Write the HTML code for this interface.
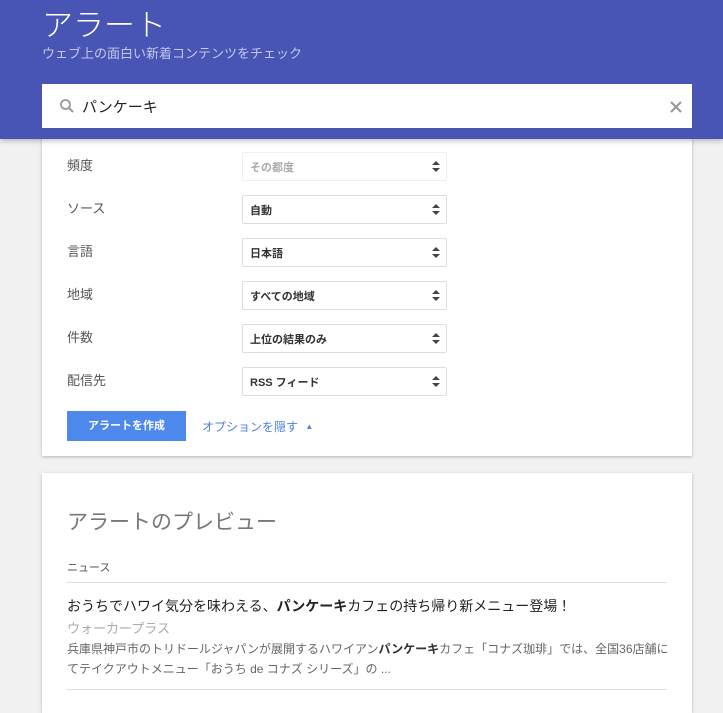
<!DOCTYPE html>
<html><head><meta charset="utf-8"><style>
*{margin:0;padding:0;box-sizing:border-box}
body{width:723px;height:700px;overflow:hidden;background:#f1f1f1;font-family:"Liberation Sans","Noto Sans CJK JP",sans-serif;position:relative}
.hdr{position:absolute;left:0;top:0;width:723px;height:139px;background:#4855b5;box-shadow:0 2px 5px rgba(0,0,0,.25);z-index:2}
.t1{position:absolute;left:42px;top:0px;font-size:31px;color:#fff;font-weight:300}
.t2{position:absolute;left:42px;top:43px;font-size:13px;color:#c3c8ea}
.search{position:absolute;left:42px;top:84px;width:650px;height:44px;background:#fff}
.search .q{position:absolute;left:40px;top:12px;font-size:15px;color:#222}
.lab{position:absolute;left:25px;font-size:13px;color:#555}
.card{position:absolute;left:42px;width:650px;background:#fff;box-shadow:0 1px 3px rgba(0,0,0,.25)}
.sel{position:absolute;left:200px;width:205px;height:29px;border:1px solid #ddd;border-radius:2px;font-size:11px;font-weight:bold;color:#333;padding:6px 0 0 7px}
.sel.dis{color:#aaa;border-color:#eee}
.sel:after{content:"";position:absolute;right:6px;top:8px;border:4px solid transparent;border-bottom:4px solid #444;border-top:none}
.sel:before{content:"";position:absolute;right:6px;top:15px;border:4px solid transparent;border-top:4px solid #444;border-bottom:none}
</style></head><body>
<div class="hdr">
<div class="t1">アラート</div>
<div class="t2">ウェブ上の面白い新着コンテンツをチェック</div>
<div class="search">
<svg style="position:absolute;left:17px;top:14px" width="16" height="16" viewBox="0 0 16 16"><circle cx="6.5" cy="6.5" r="4.5" stroke="#999" stroke-width="1.8" fill="none"/><line x1="10" y1="10" x2="14" y2="14" stroke="#999" stroke-width="2"/></svg>
<div class="q">パンケーキ</div>
<svg style="position:absolute;left:628px;top:17px" width="12" height="12"><path d="M1 1L11 11M11 1L1 11" stroke="#999" stroke-width="2.2"/></svg>
</div>
</div>
<div class="card" style="top:130px;height:326px">
<div class="lab" style="top:25px">頻度</div><div class="sel dis" style="top:22px">その都度</div>
<div class="lab" style="top:68px">ソース</div><div class="sel" style="top:65px">自動</div>
<div class="lab" style="top:111px">言語</div><div class="sel" style="top:108px">日本語</div>
<div class="lab" style="top:154px">地域</div><div class="sel" style="top:151px">すべての地域</div>
<div class="lab" style="top:197px">件数</div><div class="sel" style="top:194px">上位の結果のみ</div>
<div class="lab" style="top:240px">配信先</div><div class="sel" style="top:237px">RSS フィード</div>
<div style="position:absolute;left:25px;top:281px;width:119px;height:30px;background:#4d88ec;color:#fff;font-size:11px;font-weight:bold;text-align:center;line-height:30px">アラートを作成</div>
<div style="position:absolute;left:160px;top:288px;font-size:12px;color:#4d7fd8">オプションを隠す <span style="font-size:8px;position:relative;top:-2px;margin-left:4px">▲</span></div>
</div>
<div class="card" style="top:473px;height:240px">
<div style="position:absolute;left:25px;top:33px;font-size:21px;color:#777">アラートのプレビュー</div>
<div style="position:absolute;left:25px;top:86px;font-size:11px;color:#555">ニュース</div>
<div style="position:absolute;left:25px;top:109px;width:600px;border-top:1px solid #ddd"></div>
<div style="position:absolute;left:25px;top:123px;font-size:14px;color:#222">おうちでハワイ気分を味わえる、<b>パンケーキ</b>カフェの持ち帰り新メニュー登場！</div>
<div style="position:absolute;left:25px;top:145px;font-size:13px;color:#aaa">ウォーカープラス</div>
<div style="position:absolute;left:25px;top:166px;width:605px;font-size:12px;line-height:20px;color:#666">兵庫県神戸市のトリドールジャパンが展開するハワイアン<b style="color:#333">パンケーキ</b>カフェ「コナズ珈琲」では、全国36店舗にてテイクアウトメニュー「おうち de コナズ シリーズ」の ...</div>
<div style="position:absolute;left:25px;top:216px;width:600px;border-top:1px solid #ddd"></div>
</div>
</body></html>
